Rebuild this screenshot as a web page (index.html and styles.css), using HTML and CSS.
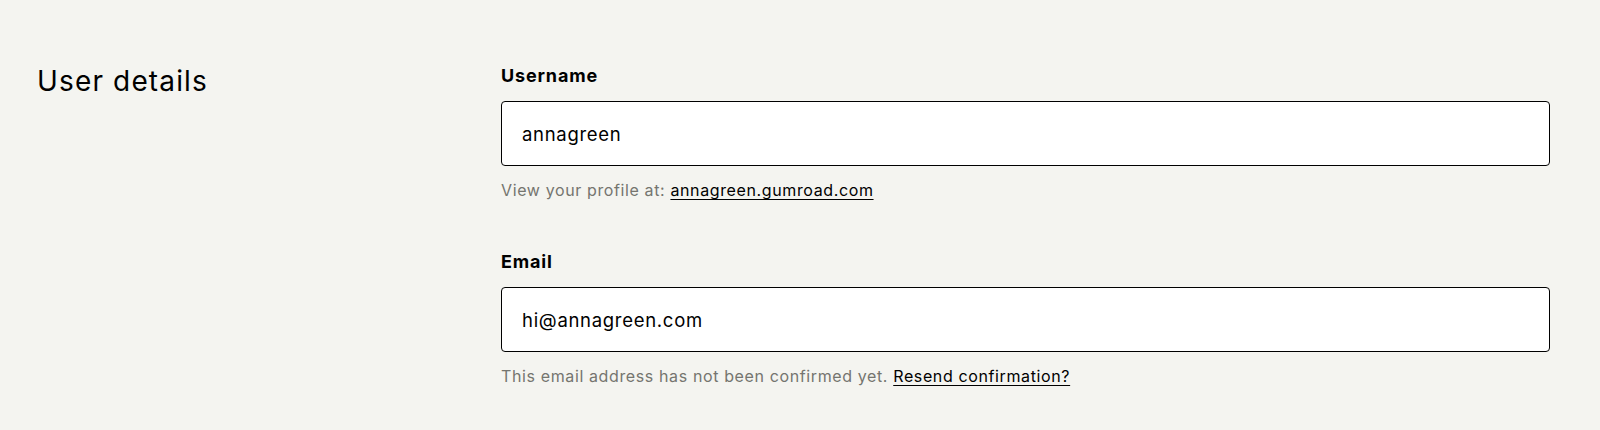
FILE: index.html
```html
<!DOCTYPE html>
<html lang="en">
<head>
<meta charset="utf-8">
<title>Settings</title>
<link rel="stylesheet" href="styles.css">
</head>
<body>
<section class="settings-section">
  <header class="section-header">
    <h2>User details</h2>
  </header>
  <div class="fields">
    <fieldset class="field">
      <label class="field-label" for="username">Username</label>
      <input class="text-input" id="username" type="text" value="annagreen">
      <p class="hint">View your profile at: <a href="#">annagreen.gumroad.com</a></p>
    </fieldset>
    <fieldset class="field">
      <label class="field-label" for="email">Email</label>
      <input class="text-input" id="email" type="email" value="hi@annagreen.com">
      <p class="hint">This email address has not been confirmed yet. <a href="#">Resend confirmation?</a></p>
    </fieldset>
  </div>
</section>
</body>
</html>
```
FILE: styles.css
```css
* { box-sizing: border-box; }
html, body { margin: 0; padding: 0; }
body {
  background: #f4f4f0;
  color: #000;
  font-family: Inter, "Liberation Sans", sans-serif;
  height: 430px;
  overflow: hidden;
}
.settings-section {
  display: grid;
  grid-template-columns: 424px 1fr;
  column-gap: 40px;
  padding: 62px 50px 0 37px;
}
.section-header h2 {
  margin: 1px 0 0;
  font-size: 28px;
  line-height: 36px;
  font-weight: 400;
  letter-spacing: 1.15px;
}
.fields {
  display: flex;
  flex-direction: column;
  gap: 46px;
}
.field {
  border: 0;
  margin: 0;
  padding: 0;
  display: flex;
  flex-direction: column;
  min-width: 0;
}
.field-label {
  margin-top: 2px;
  font-size: 18px;
  line-height: 24px;
  font-weight: 700;
  letter-spacing: 0.85px;
  margin-bottom: 13px;
}
.text-input {
  height: 65px;
  border: 1px solid #000;
  border-radius: 4px;
  background: #fff;
  padding: 0 20px;
  font-family: inherit;
  font-size: 18.5px;
  letter-spacing: 0.7px;
  color: #000;
  outline: none;
}
.hint {
  margin: 12px 0 0;
  font-size: 16px;
  line-height: 24px;
  letter-spacing: 0.62px;
  color: #75756f;
}
.hint a {
  color: #000;
  text-decoration: underline;
  text-underline-offset: 3px;
}
```
